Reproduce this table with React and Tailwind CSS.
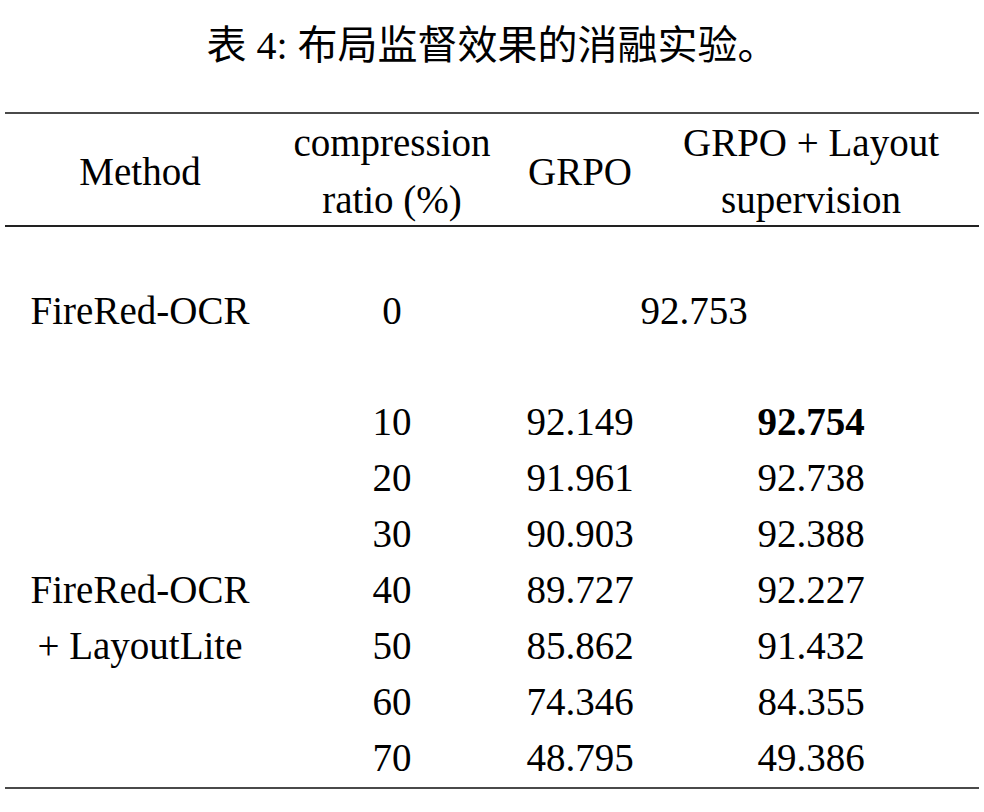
import React from "react";

const rows = [
  ["10", "92.149", "92.754", true, ""],
  ["20", "91.961", "92.738", false, ""],
  ["30", "90.903", "92.388", false, ""],
  ["40", "89.727", "92.227", false, "FireRed-OCR"],
  ["50", "85.862", "91.432", false, "+ LayoutLite"],
  ["60", "74.346", "84.355", false, ""],
  ["70", "48.795", "49.386", false, ""],
];

export default function App() {
  return (
    <div className="w-[984px] h-[812px] bg-white text-black overflow-hidden font-['Liberation_Serif',serif]">
      <div className="h-[90px] flex items-center justify-center pb-[2px]">
        <h1 className="text-[40px] leading-none font-normal">
          <span className="font-['Noto_Sans_CJK_SC',sans-serif]">表</span>
          <span> 4: </span>
          <span className="font-['Noto_Sans_CJK_SC',sans-serif]">布局监督效果的消融实验。</span>
        </h1>
      </div>
      <div className="h-[22px]" />
      <div className="mx-[5px] w-[974px]">
        <div className="h-[2px] bg-[#4a4a4a]" />
        <div className="grid grid-cols-[270px_234px_142px_320px] h-[111px] pb-[6px] items-center text-center text-[39px] leading-[57px]">
          <div>Method</div>
          <div>compression<br />ratio (%)</div>
          <div>GRPO</div>
          <div>GRPO + Layout<br />supervision</div>
        </div>
        <div className="h-[1.5px] bg-[#222]" />
        <div className="grid grid-cols-[270px_234px_142px_320px] text-center text-[39px] leading-[56px]">
          <div className="col-span-4 h-[56px]" />
          <div>FireRed-OCR</div>
          <div>0</div>
          <div className="col-span-2 pr-[92px]">92.753</div>
          <div className="col-span-4 h-[55px]" />
          {rows.map(([r, a, b, bold, label]) => (
            <React.Fragment key={r}>
              <div>{label}</div>
              <div>{r}</div>
              <div>{a}</div>
              <div className={bold ? "font-bold" : ""}>{b}</div>
            </React.Fragment>
          ))}
        </div>
        <div className="h-[1px]" />
        <div className="h-[2px] bg-[#4a4a4a]" />
      </div>
    </div>
  );
}
